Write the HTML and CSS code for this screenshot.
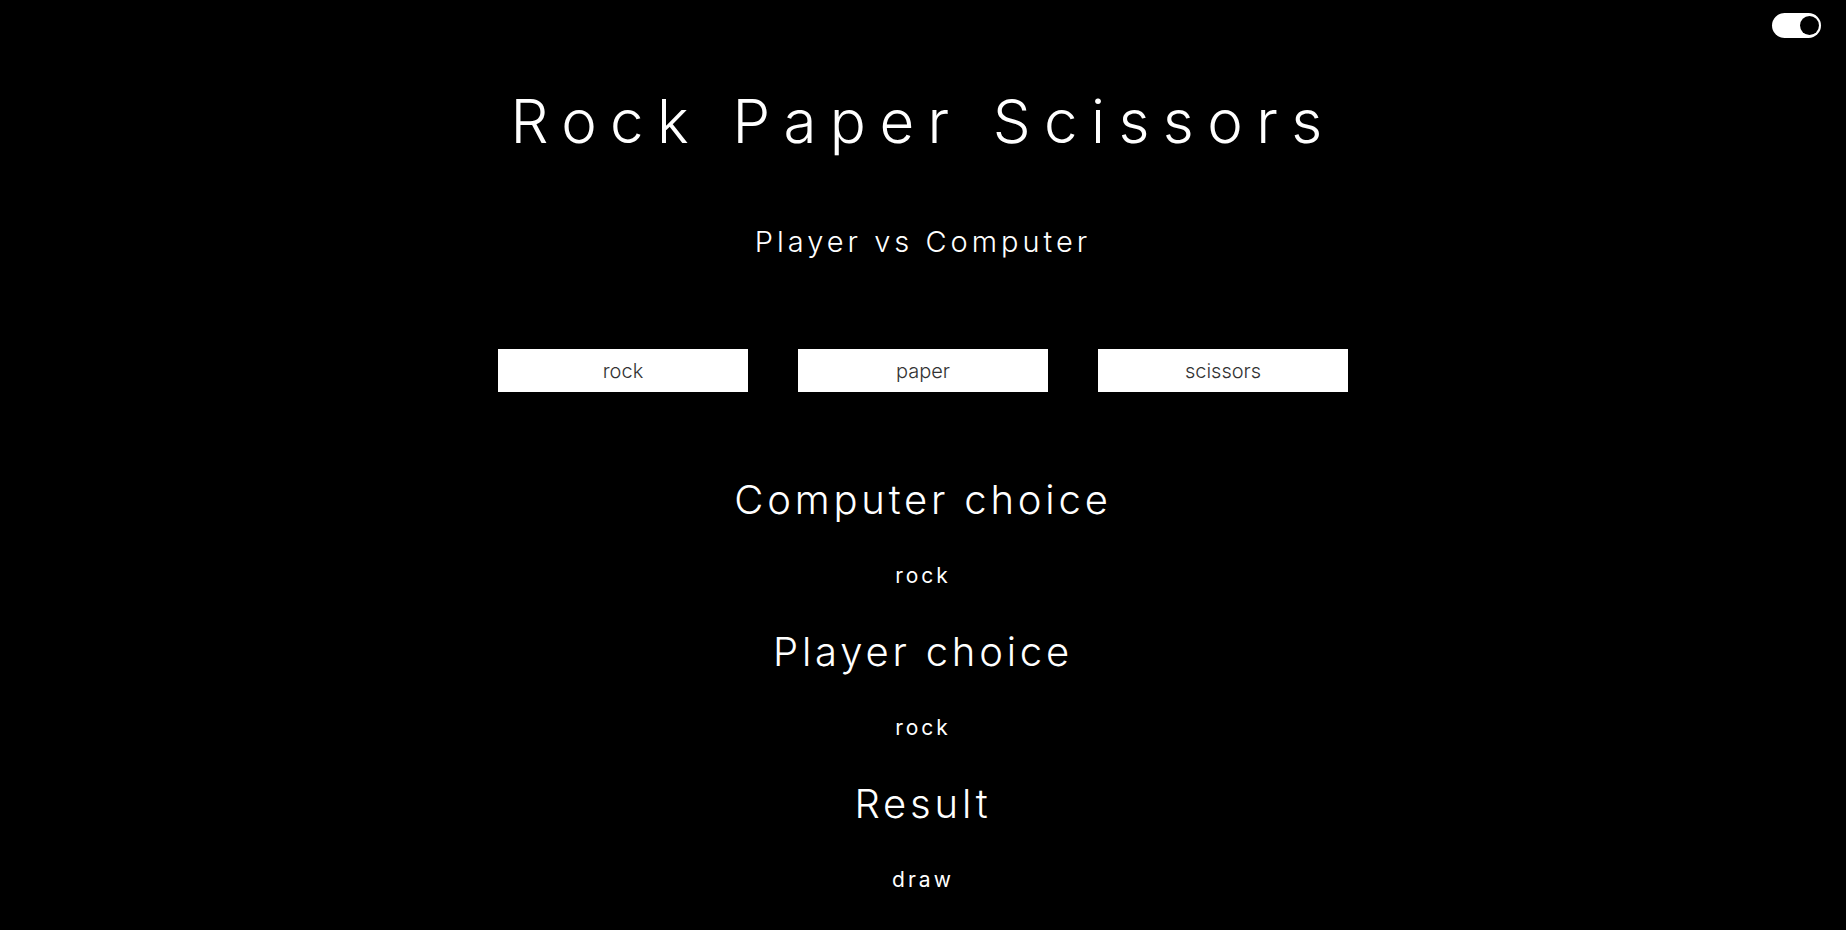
FILE: index.html
```html
<!DOCTYPE html>
<html lang="en">
<head>
<meta charset="utf-8">
<title>Rock Paper Scissors</title>
<link rel="stylesheet" href="styles.css">
</head>
<body>
<label class="toggle"><span class="knob"></span></label>
<main class="game">
  <h1 class="title">Rock Paper Scissors</h1>
  <h2 class="subtitle">Player vs Computer</h2>
  <div class="choices">
    <button class="choice">rock</button>
    <button class="choice">paper</button>
    <button class="choice">scissors</button>
  </div>
  <section class="results">
    <h2 class="label">Computer choice</h2>
    <p class="value">rock</p>
    <h2 class="label">Player choice</h2>
    <p class="value">rock</p>
    <h2 class="label">Result</h2>
    <p class="value">draw</p>
  </section>
</main>
</body>
</html>
```

FILE: styles.css
```css
html, body {
  margin: 0;
  padding: 0;
  background: #000;
  color: #fff;
  font-family: Inter, "Open Sans", sans-serif;
}

.toggle {
  position: absolute;
  top: 13px;
  right: 25px;
  width: 49px;
  height: 25px;
  border-radius: 13px;
  background: #fff;
}

.knob {
  position: absolute;
  top: 3px;
  right: 2px;
  width: 19px;
  height: 19px;
  border-radius: 50%;
  background: #000;
}

.game {
  display: flex;
  flex-direction: column;
  align-items: center;
}

.title {
  margin: 91px 0 0;
  font-size: 60px;
  line-height: 60px;
  font-weight: 300;
  letter-spacing: 13.4px;
}

.subtitle {
  margin: 76px 0 0;
  font-size: 29px;
  line-height: 29px;
  font-weight: 300;
  letter-spacing: 4px;
}

.choices {
  display: flex;
  gap: 50px;
  margin-top: 93px;
}

.choice {
  width: 250px;
  height: 43px;
  border: 0;
  border-radius: 0;
  background: #fff;
  color: #333;
  font-family: Inter, "Open Sans", sans-serif;
  font-size: 20px;
  font-weight: 300;
  padding: 0;
}

.results {
  display: flex;
  flex-direction: column;
  align-items: center;
  gap: 46px;
  margin-top: 88px;
}

.label {
  margin: 0;
  font-size: 40px;
  line-height: 40px;
  font-weight: 300;
  letter-spacing: 3.8px;
}

.value {
  margin: 0;
  font-size: 21px;
  line-height: 20px;
  font-weight: 400;
  letter-spacing: 3px;
}
```
